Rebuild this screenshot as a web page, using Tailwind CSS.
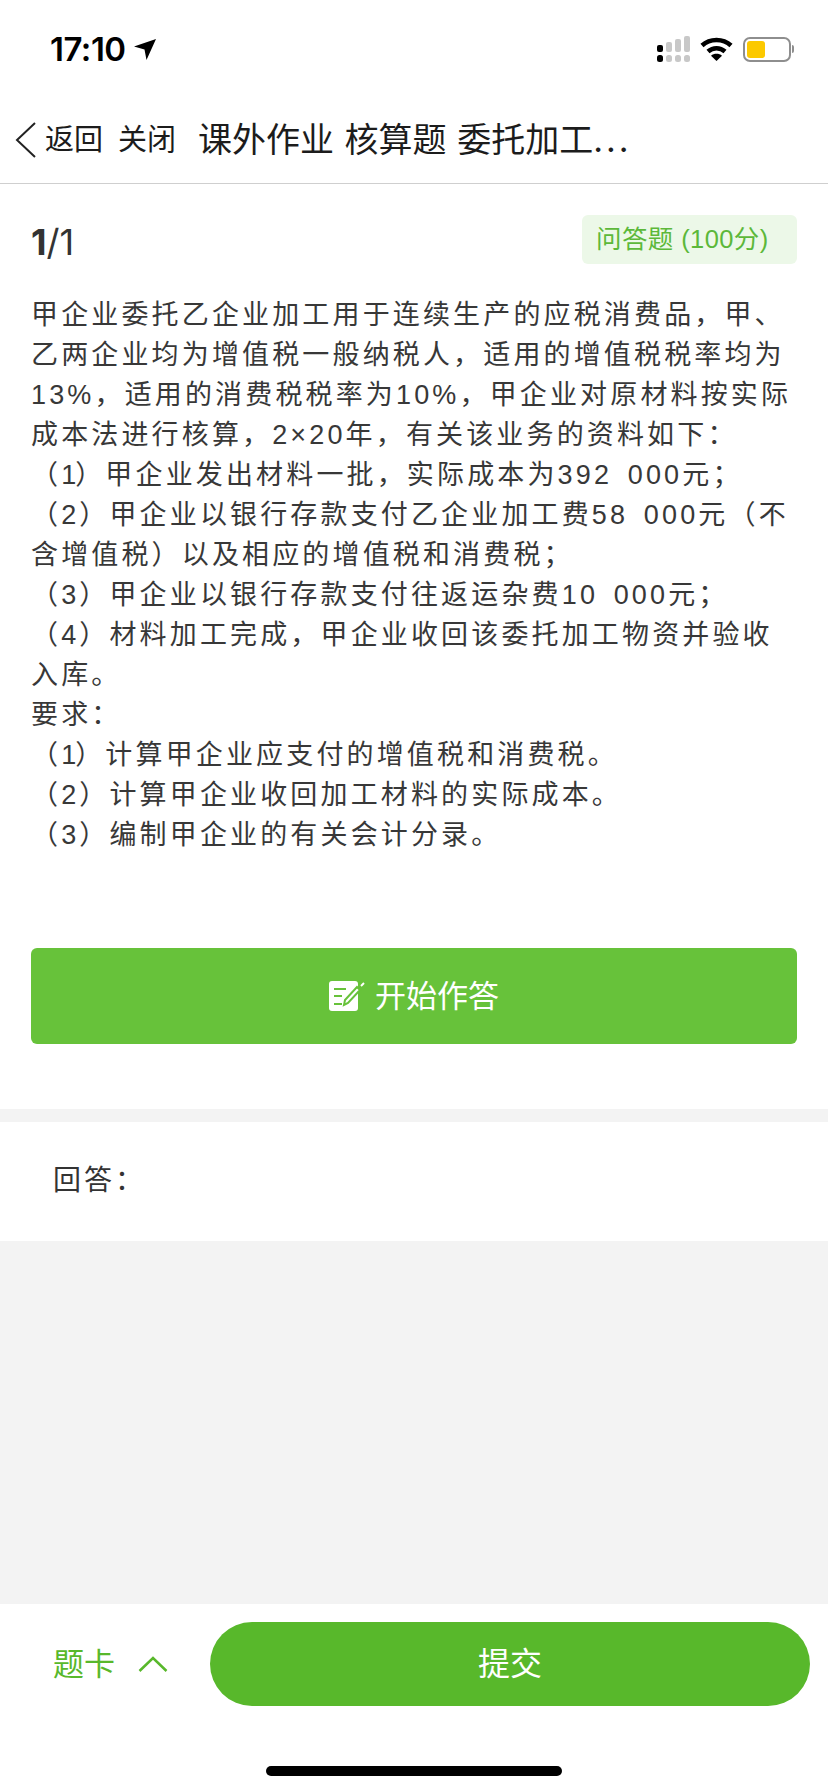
<!DOCTYPE html>
<html lang="zh">
<head>
    <meta charset="UTF-8">
    <meta name="viewport" content="width=device-width, initial-scale=1.0">
    <title>课外作业</title>
    <script src="https://cdn.jsdelivr.net/npm/@tailwindcss/browser@4"></script>
</head>
<body class="bg-white font-['Inter','Noto_Sans_CJK_SC',sans-serif] w-[828px] h-[1792px] flex flex-col overflow-hidden">

    <!-- Status bar -->
    <div class="h-[96px] flex items-start justify-between pl-[50px] pr-[34px] pt-[29px] shrink-0">
        <div class="flex items-center gap-[8px]">
            <span class="text-[33px] leading-[40px] font-semibold text-black tracking-[-0.5px]">17:10</span>
            <svg width="22" height="22" viewBox="0 0 22 22"><path d="M22 1 0 8.500l10.500 3L12.500 22z" fill="#000"/></svg>
        </div>
        <div class="flex items-center gap-[9px] h-[40px]">
            <svg width="34" height="26" viewBox="0 0 34 26">
                <rect x="0" y="9" width="6" height="7" rx="2" fill="#000"/>
                <rect x="0" y="19" width="6" height="7" rx="2.500" fill="#000"/>
                <rect x="9" y="6" width="6" height="10" rx="2" fill="#c8c8c8"/>
                <rect x="9" y="19" width="6" height="7" rx="2.500" fill="#c8c8c8"/>
                <rect x="18" y="3" width="6" height="13" rx="2" fill="#c8c8c8"/>
                <rect x="18" y="19" width="6" height="7" rx="2.500" fill="#c8c8c8"/>
                <rect x="27" y="0" width="6" height="16" rx="2" fill="#c8c8c8"/>
                <rect x="27" y="19" width="6" height="7" rx="2.500" fill="#c8c8c8"/>
            </svg>
            <svg width="33" height="24" viewBox="0 0 33 24" fill="none" stroke="#000" stroke-width="4.500">
                <path d="M2 8.500C10 1 23 1 31 8.500"/>
                <path d="M8 14.500c5-4.500 12-4.500 17 0"/>
                <path d="M16.500 24 11 18.800c3-2.600 8-2.600 11 0z" fill="#000" stroke="none"/>
            </svg>
            <div class="flex items-center ml-[1px]">
                <div class="w-[48px] h-[25px] rounded-[7px] border-2 border-[#8e8e8e] p-[2px]">
                    <div class="w-[18px] h-full bg-[#fcc900] rounded-[3px]"></div>
                </div>
                <div class="w-[2px] h-[8px] bg-[#8e8e8e] rounded-r-[2px] ml-[1px]"></div>
            </div>
        </div>
    </div>

    <!-- Nav bar -->
    <div class="h-[88px] shrink-0 flex items-center border-b border-[#cfcfcf] pl-[15px] text-[#1c1c1c]">
        <svg width="21" height="36" viewBox="0 0 21 36" fill="none" stroke="#222" stroke-width="2"><path d="M20 1 2 18l18 17"/></svg>
        <span class="ml-[9px] text-[29px] leading-[40px]">返回</span>
        <span class="ml-[15px] text-[29px] leading-[40px]">关闭</span>
        <span class="ml-[22px] text-[34px] leading-[40px] [word-spacing:1px]">课外作业 核算题 委托加工<span class="tracking-[3px]">...</span></span>
    </div>

    <!-- Question -->
    <div class="h-[925px] shrink-0 px-[31px]">
        <div class="flex justify-between items-start pt-[31px]">
            <div class="text-[36px] leading-[44px] text-[#333] mt-[5px]"><span class="font-bold">1</span>/1</div>
            <div class="w-[215px] h-[49px] rounded-[6px] bg-[#ecf8e8] text-[#5cb83a] text-[25.5px] tracking-[0.4px] flex items-center pl-[14px] font-['Liberation_Sans','Noto_Sans_CJK_SC',sans-serif]">问答题 (100分)</div>
        </div>
        <div class="mt-[31px] text-[27px] leading-[40px] tracking-[3.15px] [word-spacing:5px] text-[#383838] whitespace-nowrap font-['Liberation_Sans','Noto_Sans_CJK_SC',sans-serif]">
            <p>甲企业委托乙企业加工用于连续生产的应税消费品，甲、</p>
            <p>乙两企业均为增值税一般纳税人，适用的增值税税率均为</p>
            <p>13%，适用的消费税税率为10%，甲企业对原材料按实际</p>
            <p>成本法进行核算，2×20年，有关该业务的资料如下：</p>
            <p>（<span class="tracking-[-1px]">1</span>）甲企业发出材料一批，实际成本为392 000元；</p>
            <p>（2）甲企业以银行存款支付乙企业加工费58 000元（不</p>
            <p>含增值税）以及相应的增值税和消费税；</p>
            <p>（3）甲企业以银行存款支付往返运杂费10 000元；</p>
            <p>（4）材料加工完成，甲企业收回该委托加工物资并验收</p>
            <p>入库。</p>
            <p>要求：</p>
            <p>（<span class="tracking-[-1px]">1</span>）计算甲企业应支付的增值税和消费税。</p>
            <p>（2）计算甲企业收回加工材料的实际成本。</p>
            <p>（3）编制甲企业的有关会计分录。</p>
        </div>
        <button class="mt-[93px] w-[766px] h-[96px] rounded-[6px] bg-[#67c23a] text-white text-[31px] flex items-center justify-center gap-[10px]">
            <svg width="36" height="32" viewBox="0 0 36 32">
                <rect x="0" y="1" width="29" height="30" rx="3" fill="#fff"/>
                <path d="M5 9h12M5 16h8M5 24h8" stroke="#67c23a" stroke-width="2" fill="none"/>
                <path d="M15 25l1-5L28 7l3 3-12 13z" fill="#fff" stroke="#67c23a" stroke-width="2"/>
                <path d="M32 6l3-3" stroke="#fff" stroke-width="2"/>
            </svg>
            开始作答
        </button>
    </div>

    <div class="h-[13px] shrink-0 bg-[#f3f3f3]"></div>

    <div class="h-[119px] shrink-0 pl-[53px] pt-[38px] text-[28px] leading-[40px] text-[#333] tracking-[3px]">回答：</div>

    <div class="flex-1 bg-[#f3f3f3]"></div>

    <!-- Footer -->
    <div class="h-[188px] shrink-0 bg-white flex flex-col">
        <div class="flex items-center pt-[18px]">
            <div class="w-[210px] pl-[53px] flex items-center gap-[23px] text-[#58b82b] text-[31px] leading-[84px]">
                <span>题卡</span>
                <svg width="30" height="16" viewBox="0 0 30 16" fill="none" stroke="#58b82b" stroke-width="2.500"><path d="M1.500 15 15 2l13.500 13"/></svg>
            </div>
            <button class="w-[600px] h-[84px] rounded-full bg-[#58b82b] text-white text-[32px]">提交</button>
        </div>
        <div class="w-[296px] h-[10px] rounded-full bg-black mx-auto mt-[60px]"></div>
    </div>

</body>
</html>
